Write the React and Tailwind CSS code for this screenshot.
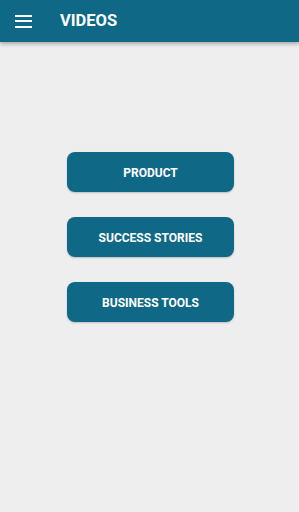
export default function App() {
  const items = ["PRODUCT", "SUCCESS STORIES", "BUSINESS TOOLS"];
  return (
    <div className="w-[299px] h-[512px] bg-[#eeeeee] flex flex-col" style={{ fontFamily: "Roboto, 'Liberation Sans', sans-serif" }}>
      <div className="h-[42px] bg-[#0f6986] flex items-center shadow-[0_2px_4px_rgba(0,0,0,0.3)] z-10">
        <div className="ml-[15px] w-[17px] flex flex-col gap-[3.5px]">
          <div className="h-[2px] bg-white" />
          <div className="h-[2px] bg-white" />
          <div className="h-[2px] bg-white" />
        </div>
        <div className="ml-[28px] text-white text-[16.5px] font-bold">VIDEOS</div>
      </div>
      <div className="flex flex-col gap-[25px] pt-[110px] pl-[67px]">
        {items.map((t) => (
          <div key={t} className="w-[167px] h-[40px] rounded-[8px] bg-[#0f6986] flex items-center justify-center pt-[1px] text-white text-[12px] font-bold shadow-[0_1px_2px_rgba(0,0,0,0.2)]">
            {t}
          </div>
        ))}
      </div>
    </div>
  );
}
